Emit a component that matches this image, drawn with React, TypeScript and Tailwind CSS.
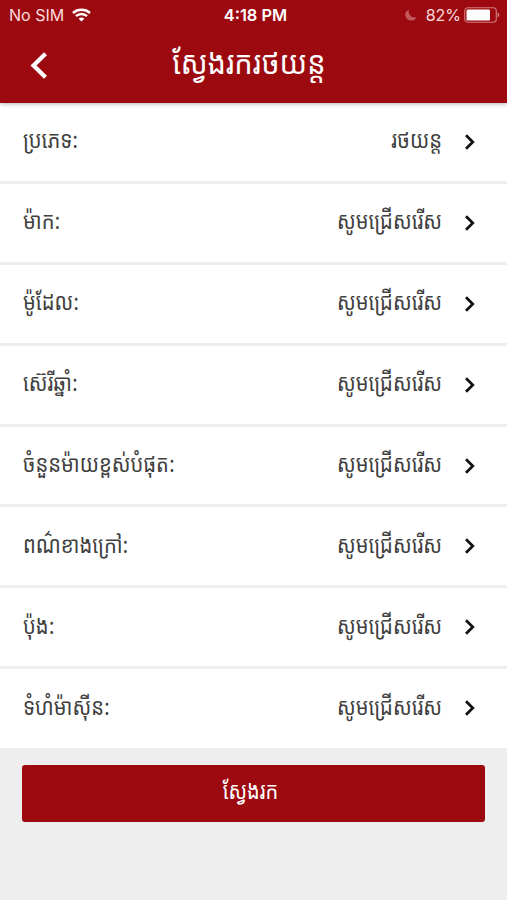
import React from 'react';

interface FilterRow {
  label: string;
  value: string;
}

const rows: FilterRow[] = [
  { label: 'ប្រភេទ:', value: 'រថយន្ត' },
  { label: 'ម៉ាក:', value: 'សូមជ្រើសរើស' },
  { label: 'ម៉ូដែល:', value: 'សូមជ្រើសរើស' },
  { label: 'ស៊េរីឆ្នាំ:', value: 'សូមជ្រើសរើស' },
  { label: 'ចំនួនម៉ាយខ្ពស់បំផុត:', value: 'សូមជ្រើសរើស' },
  { label: 'ពណ៌ខាងក្រៅ:', value: 'សូមជ្រើសរើស' },
  { label: 'ប៉ុង:', value: 'សូមជ្រើសរើស' },
  { label: 'ទំហំម៉ាស៊ីន:', value: 'សូមជ្រើសរើស' },
];

const WifiIcon = () => (
  <svg className="w-[19px] h-[14px]" viewBox="0 0 19 14" fill="none">
    <path d="M1 5C5.600.8 13.400.8 18 5" stroke="white" strokeWidth="2.500" />
    <path d="M4 8.200c3-2.900 8-2.900 11 0" stroke="white" strokeWidth="2.500" />
    <path d="M9.500 13.600 6.600 10.700c1.600-1.500 4.200-1.500 5.800 0z" fill="white" />
  </svg>
);

const MoonIcon = () => (
  <svg className="w-[12px] h-[12px]" viewBox="0 0 12 12">
    <path d="M4 .6C.9 1.900 0 4.200.3 6.500.9 9.600 3.500 11.500 6.500 11.500c2.200 0 4.200-1.200 5.100-3.100C7.300 9.500 2.200 6 4 .6z" fill="#c2595c" />
  </svg>
);

const BatteryIcon = () => (
  <svg className="w-[36px] h-[16px]" viewBox="0 0 36 16">
    <rect x="0.700" y="0.800" width="31.600" height="14.400" rx="3.200" fill="none" stroke="#d37b7e" strokeWidth="1.100" />
    <rect x="2.500" y="2.600" width="23.500" height="10.800" rx="1.200" fill="white" />
    <path d="M33.600 5.600c2.400.8 2.400 4 0 4.800z" fill="#d37b7e" />
  </svg>
);

const StatusBar = () => (
  <div className="h-[30px] pl-[9px] pr-[7px] grid grid-cols-[1fr_auto_1fr] items-center text-[16px] leading-none">
    <div className="flex items-center gap-2 text-[#fbdcdd]">
      <span>No SIM</span>
      <WifiIcon />
    </div>
    <span className="pl-[2px] font-semibold text-[16.400px]">4:18 PM</span>
    <div className="flex items-center justify-end text-[#fbdcdd]">
      <MoonIcon />
      <span className="ml-[9px] mr-[3px]">82%</span>
      <BatteryIcon />
    </div>
  </div>
);

const App: React.FC = () => {
  return (
    <div className="h-[900px] w-full flex flex-col overflow-hidden bg-[#eeeeee] font-['Inter','Noto_Sans_Khmer','Khmer_OS',sans-serif]">
      <header className="relative h-[103px] shrink-0 bg-[#9c0a0f] text-white shadow-[0_1px_4px_rgba(0,0,0,0.3)]">
        <StatusBar />
        <div className="h-[71px] pl-[30px] pr-[39px] grid grid-cols-[40px_1fr_40px] items-center">
          <svg className="w-[18px] h-[27px]" viewBox="0 0 18 27" fill="none">
            <path d="M15.500 1.800 3.500 13.500l12 11.700" stroke="white" strokeWidth="4.200" />
          </svg>
          <h1 className="pb-[5px] text-center text-[29px] leading-[40px] scale-y-112">ស្វែងរករថយន្ត</h1>
        </div>
      </header>

      <main>
        {rows.map((row) => (
          <div
            key={row.label}
            className="h-[80.900px] last:h-[78.400px] pl-[23px] pr-[31px] flex items-center bg-white text-[#404040] text-[20.200px] border-b-[3px] border-[#eeeeee] last:border-b-0"
          >
            <span className="flex-1 pb-[3px] scale-y-115">{row.label}</span>
            <span className="pb-[3px] scale-y-115">{row.value}</span>
            <svg className="ml-[22px] w-[12px] h-[18px]" viewBox="0 0 12 18" fill="none">
              <path d="M2 2.200 8.800 9 2 15.800" stroke="#111111" strokeWidth="2.700" />
            </svg>
          </div>
        ))}
      </main>

      <div className="px-[22px] pt-[17px]">
        <button className="w-full h-[57px] rounded-[3px] bg-[#9c0a0f] text-white text-[20px]">
          <span className="inline-block pr-[6px] pb-[5px] scale-y-115">ស្វែងរក</span>
        </button>
      </div>
    </div>
  );
};

export default App;
